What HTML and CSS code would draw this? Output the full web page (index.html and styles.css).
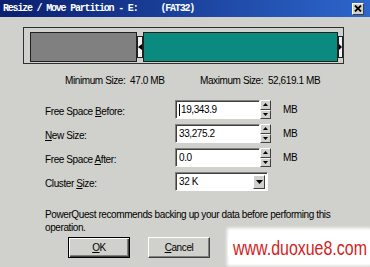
FILE: index.html
```html
<!DOCTYPE html>
<html lang="en">
<head>
  <meta charset="UTF-8">
  <title>Resize / Move Partition</title>
  <link rel="stylesheet" href="styles.css">
</head>
<body>
  <div class="dialog">
    <div class="titlebar">
      <span class="title">Resize / Move Partition - E:</span>
      <span class="title fs">(FAT32)</span>
      <span class="close-btn">
        <svg width="8" height="7" viewBox="0 0 8 7"><path d="M1 0.5 L7 6.5 M7 0.5 L1 6.5" stroke="#000" stroke-width="1.8"/></svg>
      </span>
    </div>

    <div class="partition-frame">
      <div class="bar used"></div>
      <div class="handle">
        <svg width="4" height="6" viewBox="0 0 4 6"><polygon points="4,0 0,3 4,6" fill="#000"/></svg>
      </div>
      <div class="bar free"></div>
      <div class="handle right">
        <svg width="3" height="6" viewBox="0 0 3 6"><polygon points="0,0 3,3 0,6" fill="#000"/></svg>
      </div>
    </div>

    <div class="size-info">
      <span class="min">Minimum Size:&nbsp; 47.0 MB</span>
      <span>Maximum Size:&nbsp; 52,619.1 MB</span>
    </div>

    <div class="fields">
      <label>Free Space <u>B</u>efore:</label>
      <div class="input"><span class="caret"></span>19,343.9</div>
      <div class="spin">
        <span class="spin-btn"><svg width="5" height="3" viewBox="0 0 5 3"><polygon points="0,3 2.5,0 5,3" fill="#000"/></svg></span>
        <span class="spin-btn"><svg width="5" height="3" viewBox="0 0 5 3"><polygon points="0,0 2.5,3 5,0" fill="#000"/></svg></span>
      </div>
      <span class="unit">MB</span>

      <label><u>N</u>ew Size:</label>
      <div class="input">33,275.2</div>
      <div class="spin">
        <span class="spin-btn"><svg width="5" height="3" viewBox="0 0 5 3"><polygon points="0,3 2.5,0 5,3" fill="#000"/></svg></span>
        <span class="spin-btn"><svg width="5" height="3" viewBox="0 0 5 3"><polygon points="0,0 2.5,3 5,0" fill="#000"/></svg></span>
      </div>
      <span class="unit">MB</span>

      <label>Free Space <u>A</u>fter:</label>
      <div class="input">0.0</div>
      <div class="spin">
        <span class="spin-btn"><svg width="5" height="3" viewBox="0 0 5 3"><polygon points="0,3 2.5,0 5,3" fill="#000"/></svg></span>
        <span class="spin-btn"><svg width="5" height="3" viewBox="0 0 5 3"><polygon points="0,0 2.5,3 5,0" fill="#000"/></svg></span>
      </div>
      <span class="unit">MB</span>

      <label>Cluster <u>S</u>ize:</label>
      <div class="input select">
        <span>32 K</span>
        <span class="drop-btn"><svg width="7" height="4" viewBox="0 0 7 4"><polygon points="0,0 7,0 3.5,4" fill="#000"/></svg></span>
      </div>
    </div>

    <p class="note">PowerQuest recommends backing up your data before performing this operation.</p>

    <div class="buttons">
      <button class="btn default"><u>O</u>K</button>
      <button class="btn"><u>C</u>ancel</button>
      <button class="btn"></button>
    </div>

    <div class="watermark"><span>www.duoxue8.com</span></div>
  </div>
</body>
</html>
```

FILE: styles.css
```css
body {
  margin: 0;
  background: #d0d0cc;
  font-family: "Liberation Sans", Arial, sans-serif;
  font-size: 10px;
  letter-spacing: -0.4px;
  color: #000;
}

.dialog {
  position: relative;
  width: 370px;
  height: 267px;
  overflow: hidden;
}

.titlebar {
  height: 17px;
  display: flex;
  align-items: center;
  padding-left: 3px;
  background: linear-gradient(to right, #0a1f6e, #2d66cc);
}

.title {
  font-family: "Liberation Mono", monospace;
  font-weight: bold;
  font-size: 10px;
  letter-spacing: -1.2px;
  color: #fff;
  white-space: pre;
}

.title.fs {
  margin-left: 23px;
}

.close-btn {
  margin-left: auto;
  margin-right: 6px;
  width: 10px;
  height: 10px;
  background: #d0d0cc;
  border: 1px solid;
  border-color: #fff #404040 #404040 #fff;
  display: flex;
  align-items: center;
  justify-content: center;
}

.partition-frame {
  margin: 10px 0 0 23px;
  width: 313px;
  height: 30px;
  padding: 4px 0 1px 6px;
  border: 1px solid #303030;
  display: flex;
  align-items: center;
}

.bar {
  height: 30px;
  box-sizing: border-box;
  border: 1px solid #202020;
}

.bar.used {
  width: 107px;
  background: #808080;
}

.bar.free {
  width: 195px;
  background: #0b8b80;
}

.handle {
  width: 6px;
  height: 22px;
  box-sizing: border-box;
  background: #f2f2f2;
  border: 1px solid #202020;
  display: flex;
  align-items: center;
  justify-content: center;
}

.handle.right {
  width: 5px;
}

.size-info {
  display: flex;
  margin-top: 11px;
  padding-left: 65px;
  line-height: 12px;
}

.size-info .min {
  width: 135px;
}

.fields {
  display: grid;
  grid-template-columns: 130px 85px 11px auto;
  grid-auto-rows: 19px;
  row-gap: 5px;
  margin: 13px 0 0 45px;
  align-items: center;
}

.fields label {
  padding-top: 3px;
}

.input {
  height: 19px;
  box-sizing: border-box;
  background: #fff;
  border: 1px solid;
  border-color: #808080 #fff #fff #808080;
  box-shadow: inset 1px 1px #404040;
  padding-left: 3px;
  display: flex;
  align-items: center;
}

.caret {
  width: 1px;
  height: 12px;
  background: #000;
  margin-right: 1px;
}

.spin {
  height: 19px;
  display: flex;
  flex-direction: column;
}

.spin-btn {
  flex: 1;
  box-sizing: border-box;
  background: #d0d0cc;
  border: 1px solid;
  border-color: #fff #404040 #404040 #fff;
  display: flex;
  align-items: center;
  justify-content: center;
}

.unit {
  padding-left: 12px;
}

.select {
  grid-column: 2 / span 2;
  width: 93px;
  justify-content: space-between;
  padding-right: 2px;
}

.drop-btn {
  width: 12px;
  height: 14px;
  box-sizing: border-box;
  background: #d0d0cc;
  border: 1px solid;
  border-color: #fff #404040 #404040 #fff;
  display: flex;
  align-items: center;
  justify-content: center;
}

.note {
  margin: 17px 0 0 45px;
  width: 290px;
  line-height: 13px;
}

.buttons {
  display: flex;
  gap: 18px;
  margin: 3px 0 0 68px;
}

.btn {
  width: 62px;
  height: 21px;
  box-sizing: border-box;
  padding: 0;
  background: #d0d0cc;
  border: 1px solid;
  border-color: #fff #404040 #404040 #fff;
  box-shadow: inset -1px -1px #808080;
  font: inherit;
  letter-spacing: inherit;
  color: #000;
}

.btn.default {
  border: 1px solid #000;
  box-shadow: inset 1px 1px #fff, inset -1px -1px #404040, inset -2px -2px #808080;
}

.watermark {
  position: absolute;
  left: 229px;
  top: 230px;
  width: 141px;
  height: 34px;
  padding: 6px 0 0 4px;
  box-sizing: border-box;
  background: #fff;
  box-shadow: 0 0 3px 2px #fff;
  overflow: hidden;
}

.watermark span {
  display: block;
  font-size: 21px;
  line-height: 24px;
  letter-spacing: 0;
  color: #d41c1c;
  white-space: nowrap;
  transform: scaleX(0.76);
  transform-origin: left;
}
```
